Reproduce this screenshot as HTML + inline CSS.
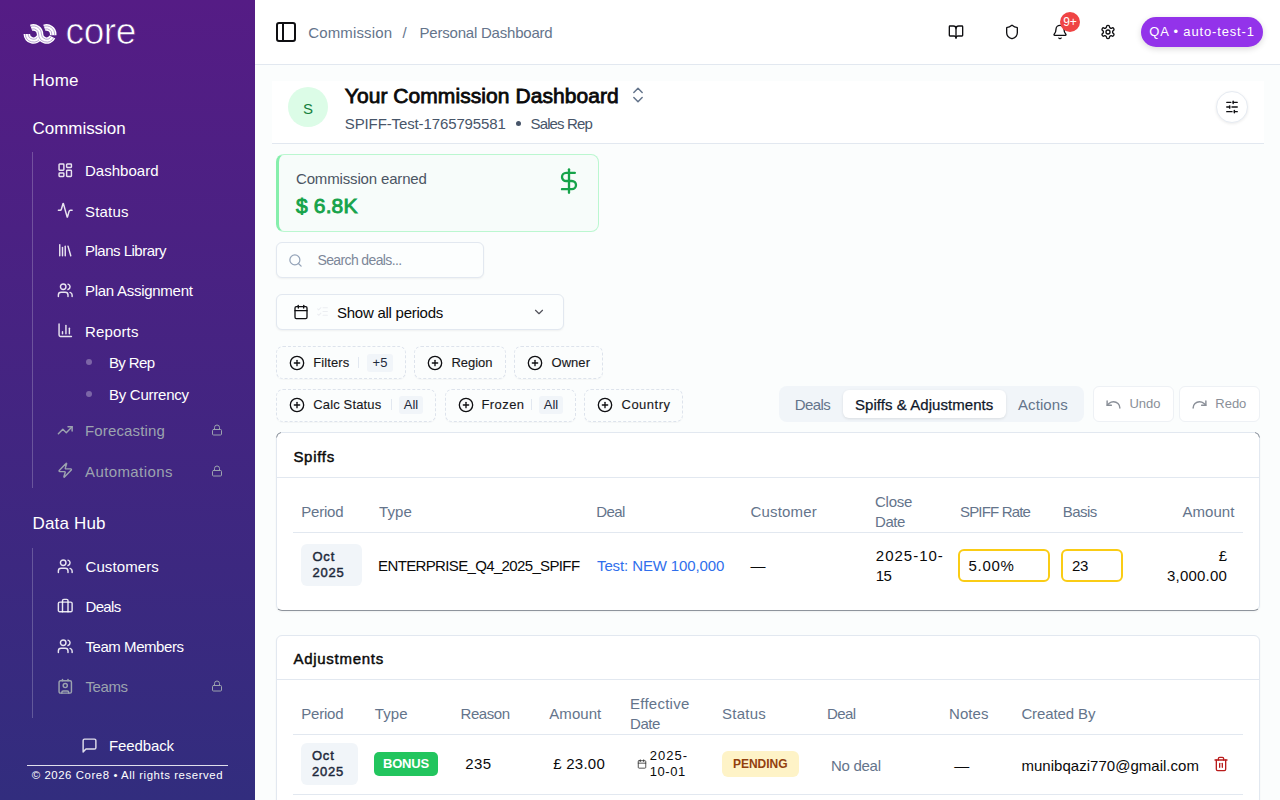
<!DOCTYPE html>
<html><head><meta charset="utf-8">
<style>
*{box-sizing:border-box;margin:0;padding:0}
html,body{width:1280px;height:800px;overflow:hidden;font-family:"Liberation Sans",sans-serif;background:#fbfdfd;position:relative}
.abs{position:absolute}
.t{position:absolute;white-space:nowrap;line-height:1}
svg{position:absolute;overflow:visible}
</style></head><body>
<div class="abs" style="left:0;top:0;width:255px;height:800px;background:linear-gradient(180deg,#551c85 0%,#322d7e 100%)"></div>
<svg style="left:20px;top:20px;" width="40" height="28" viewBox="20 20 40 28" fill="none"><g fill="none" stroke-linecap="butt"><path d="M26.80 34.00 A6.60 6.60 0 0 0 39.38 36.79" stroke="#fff" stroke-width="6.5"/><path d="M28.20 34.00 A5.20 5.20 0 0 0 38.11 36.20" stroke="#8a6bb5" stroke-width="0.6"/><path d="M25.40 34.00 A8.00 8.00 0 0 0 40.65 37.38" stroke="#8a6bb5" stroke-width="0.6"/><path d="M31.14 27.80 A6.60 6.60 0 0 1 40.00 34.00 A6.60 6.60 0 0 0 52.43 37.10" stroke="#fff" stroke-width="6.5"/><path d="M31.62 29.11 A5.20 5.20 0 0 1 38.60 34.00 A8.00 8.00 0 0 0 53.66 37.76" stroke="#8a6bb5" stroke-width="0.6"/><path d="M30.66 26.48 A8.00 8.00 0 0 1 41.40 34.00 A5.20 5.20 0 0 0 51.19 36.44" stroke="#8a6bb5" stroke-width="0.6"/><path d="M44.34 27.80 A6.60 6.60 0 0 1 53.20 34.00 L53.20 35.2" stroke="#fff" stroke-width="6.5"/><path d="M44.82 29.11 A5.20 5.20 0 0 1 51.80 34.00 L51.80 35.2" stroke="#8a6bb5" stroke-width="0.6"/><path d="M43.86 26.48 A8.00 8.00 0 0 1 54.60 34.00 L54.60 35.2" stroke="#8a6bb5" stroke-width="0.6"/></g></svg>
<div class="t" style="left:65.50px;top:12.68px;font-size:37px;color:#fff;letter-spacing:-0.370px;-webkit-text-stroke:0.7px #551c85;">core</div>
<div class="t" style="left:32.60px;top:71.81px;font-size:17px;color:#ffffff;letter-spacing:0.163px;">Home</div>
<div class="t" style="left:32.60px;top:120.01px;font-size:17px;color:#ffffff;letter-spacing:-0.052px;">Commission</div>
<div class="abs" style="left:32px;top:152px;width:1px;height:336px;background:rgba(255,255,255,0.22)"></div>
<svg style="left:56.75px;top:161.75px;" width="16.5" height="16.5" viewBox="0 0 24 24" fill="none"><g stroke="rgba(255,255,255,0.88)" stroke-width="2.1" stroke-linecap="round" stroke-linejoin="round"><rect width="7" height="9" x="3" y="3" rx="1"/><rect width="7" height="5" x="14" y="3" rx="1"/><rect width="7" height="9" x="14" y="12" rx="1"/><rect width="7" height="5" x="3" y="16" rx="1"/></g></svg>
<div class="t" style="left:85.00px;top:163.30px;font-size:15px;color:#ffffff;letter-spacing:0.013px;">Dashboard</div>
<svg style="left:56.75px;top:202.25px;" width="16.5" height="16.5" viewBox="0 0 24 24" fill="none"><g stroke="rgba(255,255,255,0.88)" stroke-width="2.1" stroke-linecap="round" stroke-linejoin="round"><path d="M22 12h-2.48a2 2 0 0 0-1.93 1.46l-2.35 8.36a.25.25 0 0 1-.48 0L9.24 2.18a.25.25 0 0 0-.48 0l-2.35 8.36A2 2 0 0 1 4.49 12H2"/></g></svg>
<div class="t" style="left:85.00px;top:203.80px;font-size:15px;color:#ffffff;letter-spacing:0.196px;">Status</div>
<svg style="left:56.75px;top:241.75px;" width="16.5" height="16.5" viewBox="0 0 24 24" fill="none"><g stroke="rgba(255,255,255,0.88)" stroke-width="2.1" stroke-linecap="round" stroke-linejoin="round"><path d="m16 6 4 14"/><path d="M12 6v14"/><path d="M8 8v12"/><path d="M4 4v16"/></g></svg>
<div class="t" style="left:85.00px;top:243.30px;font-size:15px;color:#ffffff;letter-spacing:-0.503px;">Plans Library</div>
<svg style="left:56.75px;top:281.75px;" width="16.5" height="16.5" viewBox="0 0 24 24" fill="none"><g stroke="rgba(255,255,255,0.88)" stroke-width="2.1" stroke-linecap="round" stroke-linejoin="round"><path d="M16 21v-2a4 4 0 0 0-4-4H6a4 4 0 0 0-4 4v2"/><circle cx="9" cy="7" r="4"/><path d="M22 21v-2a4 4 0 0 0-3-3.87"/><path d="M16 3.13a4 4 0 0 1 0 7.75"/></g></svg>
<div class="t" style="left:85.00px;top:283.30px;font-size:15px;color:#ffffff;letter-spacing:-0.276px;">Plan Assignment</div>
<svg style="left:56.75px;top:322.25px;" width="16.5" height="16.5" viewBox="0 0 24 24" fill="none"><g stroke="rgba(255,255,255,0.88)" stroke-width="2.1" stroke-linecap="round" stroke-linejoin="round"><path d="M3 3v16a2 2 0 0 0 2 2h16"/><path d="M18 17V9"/><path d="M13 17V5"/><path d="M8 17v-3"/></g></svg>
<div class="t" style="left:85.00px;top:323.80px;font-size:15px;color:#ffffff;letter-spacing:0.154px;">Reports</div>
<div class="abs" style="left:86px;top:359px;width:6px;height:6px;border-radius:3px;background:rgba(255,255,255,0.3)"></div>
<div class="t" style="left:108.90px;top:355.30px;font-size:15px;color:#ffffff;letter-spacing:-0.615px;">By Rep</div>
<div class="abs" style="left:86px;top:391px;width:6px;height:6px;border-radius:3px;background:rgba(255,255,255,0.3)"></div>
<div class="t" style="left:108.90px;top:387.30px;font-size:15px;color:#ffffff;letter-spacing:-0.230px;">By Currency</div>
<svg style="left:56.75px;top:421.75px;" width="16.5" height="16.5" viewBox="0 0 24 24" fill="none"><g stroke="#9ca3af" stroke-width="2.1" stroke-linecap="round" stroke-linejoin="round"><path d="M22 7 13.5 15.5 8.5 10.5 2 17"/><path d="M16 7h6v6"/></g></svg>
<div class="t" style="left:85.00px;top:423.30px;font-size:15px;color:#9ca3af;letter-spacing:0.148px;">Forecasting</div>
<svg style="left:210.5px;top:424px;" width="12" height="12" viewBox="0 0 24 24" fill="none"><g stroke="#9ca3af" stroke-width="2" stroke-linecap="round" stroke-linejoin="round"><rect width="18" height="11" x="3" y="11" rx="2"/><path d="M7 11V7a5 5 0 0 1 10 0v4"/></g></svg>
<svg style="left:56.75px;top:462.25px;" width="16.5" height="16.5" viewBox="0 0 24 24" fill="none"><g stroke="#9ca3af" stroke-width="2.1" stroke-linecap="round" stroke-linejoin="round"><path d="M4 14a1 1 0 0 1-.78-1.63l9.9-10.2a.5.5 0 0 1 .86.46l-1.92 6.02A1 1 0 0 0 13 10h7a1 1 0 0 1 .78 1.63l-9.9 10.2a.5.5 0 0 1-.86-.46l1.92-6.02A1 1 0 0 0 11 14z"/></g></svg>
<div class="t" style="left:85.00px;top:463.80px;font-size:15px;color:#9ca3af;letter-spacing:0.402px;">Automations</div>
<svg style="left:210.5px;top:464.5px;" width="12" height="12" viewBox="0 0 24 24" fill="none"><g stroke="#9ca3af" stroke-width="2" stroke-linecap="round" stroke-linejoin="round"><rect width="18" height="11" x="3" y="11" rx="2"/><path d="M7 11V7a5 5 0 0 1 10 0v4"/></g></svg>
<div class="t" style="left:32.60px;top:515.31px;font-size:17px;color:#ffffff;letter-spacing:0.148px;">Data Hub</div>
<div class="abs" style="left:32px;top:548px;width:1px;height:170px;background:rgba(255,255,255,0.22)"></div>
<svg style="left:56.75px;top:557.75px;" width="16.5" height="16.5" viewBox="0 0 24 24" fill="none"><g stroke="rgba(255,255,255,0.88)" stroke-width="2.1" stroke-linecap="round" stroke-linejoin="round"><path d="M16 21v-2a4 4 0 0 0-4-4H6a4 4 0 0 0-4 4v2"/><circle cx="9" cy="7" r="4"/><path d="M22 21v-2a4 4 0 0 0-3-3.87"/><path d="M16 3.13a4 4 0 0 1 0 7.75"/></g></svg>
<div class="t" style="left:85.50px;top:559.30px;font-size:15px;color:#ffffff;letter-spacing:0.098px;">Customers</div>
<svg style="left:56.75px;top:597.75px;" width="16.5" height="16.5" viewBox="0 0 24 24" fill="none"><g stroke="rgba(255,255,255,0.88)" stroke-width="2.1" stroke-linecap="round" stroke-linejoin="round"><path d="M16 20V4a2 2 0 0 0-2-2h-4a2 2 0 0 0-2 2v16"/><rect width="20" height="14" x="2" y="6" rx="2"/></g></svg>
<div class="t" style="left:85.50px;top:599.30px;font-size:15px;color:#ffffff;letter-spacing:-0.670px;">Deals</div>
<svg style="left:56.75px;top:637.75px;" width="16.5" height="16.5" viewBox="0 0 24 24" fill="none"><g stroke="rgba(255,255,255,0.88)" stroke-width="2.1" stroke-linecap="round" stroke-linejoin="round"><path d="M16 21v-2a4 4 0 0 0-4-4H6a4 4 0 0 0-4 4v2"/><circle cx="9" cy="7" r="4"/><path d="M22 21v-2a4 4 0 0 0-3-3.87"/><path d="M16 3.13a4 4 0 0 1 0 7.75"/></g></svg>
<div class="t" style="left:85.50px;top:639.30px;font-size:15px;color:#ffffff;letter-spacing:-0.447px;">Team Members</div>
<svg style="left:56.75px;top:677.75px;" width="16.5" height="16.5" viewBox="0 0 24 24" fill="none"><g stroke="#9ca3af" stroke-width="2.1" stroke-linecap="round" stroke-linejoin="round"><path d="M16 2v2"/><path d="M7 22v-1a2 2 0 0 1 2-2h6a2 2 0 0 1 2 2v1"/><path d="M8 2v2"/><circle cx="12" cy="11" r="3"/><rect x="3" y="4" width="18" height="18" rx="2"/></g></svg>
<div class="t" style="left:85.50px;top:679.30px;font-size:15px;color:#9ca3af;letter-spacing:-0.436px;">Teams</div>
<svg style="left:210.5px;top:680px;" width="12" height="12" viewBox="0 0 24 24" fill="none"><g stroke="#9ca3af" stroke-width="2" stroke-linecap="round" stroke-linejoin="round"><rect width="18" height="11" x="3" y="11" rx="2"/><path d="M7 11V7a5 5 0 0 1 10 0v4"/></g></svg>
<svg style="left:80.5px;top:736.5px;" width="17" height="17" viewBox="0 0 24 24" fill="none"><g stroke="rgba(255,255,255,0.85)" stroke-width="2" stroke-linecap="round" stroke-linejoin="round"><path d="M21 15a2 2 0 0 1-2 2H7l-4 4V5a2 2 0 0 1 2-2h14a2 2 0 0 1 2 2z"/></g></svg>
<div class="t" style="left:109.00px;top:738.30px;font-size:15px;color:#ffffff;letter-spacing:-0.109px;">Feedback</div>
<div class="abs" style="left:27px;top:765px;width:201px;height:1px;background:rgba(255,255,255,0.85)"></div>
<div class="t" style="left:31.70px;top:770.15px;font-size:11.4px;color:#ffffff;letter-spacing:0.574px;">© 2026 Core8 • All rights reserved</div>
<div class="abs" style="left:255px;top:0;width:1025px;height:65px;background:#fff;border-bottom:1px solid #e2e8f0"></div>
<svg style="left:274px;top:20px;" width="24" height="24" viewBox="0 0 24 24" fill="none"><g stroke="#0f0f12" stroke-width="2" stroke-linecap="round" stroke-linejoin="round"><rect width="18" height="18" x="3" y="3" rx="2"/><path d="M9 3v18"/></g></svg>
<div class="t" style="left:308.20px;top:24.60px;font-size:15px;color:#64748b;letter-spacing:0.148px;">Commission</div>
<div class="t" style="left:402.50px;top:24.60px;font-size:15px;color:#64748b;">/</div>
<div class="t" style="left:419.50px;top:24.60px;font-size:15px;color:#64748b;letter-spacing:-0.209px;">Personal Dashboard</div>
<svg style="left:948.0px;top:24.0px;" width="16" height="16" viewBox="0 0 24 24" fill="none"><g stroke="#0f0f12" stroke-width="2" stroke-linecap="round" stroke-linejoin="round"><path d="M12 7v14"/><path d="M3 18a1 1 0 0 1-1-1V4a1 1 0 0 1 1-1h5a4 4 0 0 1 4 4 4 4 0 0 1 4-4h5a1 1 0 0 1 1 1v13a1 1 0 0 1-1 1h-6a3 3 0 0 0-3 3 3 3 0 0 0-3-3z"/></g></svg>
<svg style="left:1004.0px;top:24.0px;" width="16" height="16" viewBox="0 0 24 24" fill="none"><g stroke="#0f0f12" stroke-width="2" stroke-linecap="round" stroke-linejoin="round"><path d="M20 13c0 5-3.5 7.5-7.66 8.95a1 1 0 0 1-.67-.01C7.5 20.5 4 18 4 13V6a1 1 0 0 1 1-1c2 0 4.5-1.2 6.24-2.72a1.17 1.17 0 0 1 1.52 0C14.51 3.81 17 5 19 5a1 1 0 0 1 1 1z"/></g></svg>
<svg style="left:1052.0px;top:24.0px;" width="16" height="16" viewBox="0 0 24 24" fill="none"><g stroke="#0f0f12" stroke-width="2" stroke-linecap="round" stroke-linejoin="round"><path d="M10.268 21a2 2 0 0 0 3.464 0"/><path d="M3.262 15.326A1 1 0 0 0 4 17h16a1 1 0 0 0 .74-1.673C19.41 13.956 18 12.499 18 8A6 6 0 0 0 6 8c0 4.499-1.411 5.956-2.738 7.326"/></g></svg>
<svg style="left:1100.0px;top:24.0px;" width="16" height="16" viewBox="0 0 24 24" fill="none"><g stroke="#0f0f12" stroke-width="2" stroke-linecap="round" stroke-linejoin="round"><path d="M12.22 2h-.44a2 2 0 0 0-2 2v.18a2 2 0 0 1-1 1.73l-.43.25a2 2 0 0 1-2 0l-.15-.08a2 2 0 0 0-2.73.73l-.22.38a2 2 0 0 0 .73 2.73l.15.1a2 2 0 0 1 1 1.72v.51a2 2 0 0 1-1 1.74l-.15.09a2 2 0 0 0-.73 2.73l.22.38a2 2 0 0 0 2.73.73l.15-.08a2 2 0 0 1 2 0l.43.25a2 2 0 0 1 1 1.73V20a2 2 0 0 0 2 2h.44a2 2 0 0 0 2-2v-.18a2 2 0 0 1 1-1.73l.43-.25a2 2 0 0 1 2 0l.15.08a2 2 0 0 0 2.73-.73l.22-.39a2 2 0 0 0-.73-2.73l-.15-.08a2 2 0 0 1-1-1.74v-.5a2 2 0 0 1 1-1.74l.15-.09a2 2 0 0 0 .73-2.73l-.22-.38a2 2 0 0 0-2.73-.73l-.15.08a2 2 0 0 1-2 0l-.43-.25a2 2 0 0 1-1-1.73V4a2 2 0 0 0-2-2z"/><circle cx="12" cy="12" r="3"/></g></svg>
<div class="abs" style="left:1060px;top:12px;width:20px;height:20px;border-radius:10px;background:#ef4444"></div>
<div class="t" style="left:1070.00px;top:16.04px;font-size:12px;color:#fff;width:20px;margin-left:-10px;text-align:center;">9+</div>
<div class="abs" style="left:1141px;top:17px;width:122px;height:30px;border-radius:15px;background:#9333ea;box-shadow:0 2px 6px rgba(0,0,0,0.15)"></div>
<div class="t" style="left:1149.30px;top:25.10px;font-size:13px;color:#fff;letter-spacing:0.845px;">QA • auto-test-1</div>
<div class="abs" style="left:272px;top:81px;width:992px;height:63px;background:#fff;border-bottom:1px solid #e2e8f0"></div>
<div class="abs" style="left:288px;top:87px;width:40px;height:40px;border-radius:20px;background:#dcfce7"></div>
<div class="t" style="left:308.00px;top:100.80px;font-size:15px;color:#15803d;width:20px;margin-left:-10px;text-align:center;">S</div>
<div class="t" style="left:344.75px;top:84.97px;font-size:21px;color:#0a0a0a;-webkit-text-stroke:0.8px #0a0a0a;letter-spacing:0.065px;">Your Commission Dashboard</div>
<svg style="left:627.5px;top:84.5px;" width="20" height="20" viewBox="0 0 24 24" fill="none"><g stroke="#64748b" stroke-width="1.8" stroke-linecap="round" stroke-linejoin="round"><path d="m7 15 5 5 5-5"/><path d="m7 9 5-5 5 5"/></g></svg>
<div class="t" style="left:344.75px;top:116.30px;font-size:15px;color:#475569;letter-spacing:-0.116px;">SPIFF-Test-1765795581</div>
<div class="abs" style="left:516px;top:121px;width:5px;height:5px;border-radius:3px;background:#475569"></div>
<div class="t" style="left:530.50px;top:116.30px;font-size:15px;color:#475569;letter-spacing:-0.857px;">Sales Rep</div>
<div class="abs" style="left:1216px;top:91px;width:32px;height:32px;border-radius:16px;background:#fff;border:1px solid #e6ebf2;box-shadow:0 1px 3px rgba(0,0,0,0.08)"></div>
<svg style="left:1225px;top:100px;" width="14" height="14" viewBox="0 0 24 24" fill="none"><g stroke="#0f0f12" stroke-width="2.4" stroke-linecap="round" stroke-linejoin="round"><line x1="21" x2="14" y1="4" y2="4"/><line x1="10" x2="3" y1="4" y2="4"/><line x1="21" x2="12" y1="12" y2="12"/><line x1="8" x2="3" y1="12" y2="12"/><line x1="21" x2="16" y1="20" y2="20"/><line x1="12" x2="3" y1="20" y2="20"/><line x1="14" x2="14" y1="2" y2="6"/><line x1="8" x2="8" y1="10" y2="14"/><line x1="16" x2="16" y1="18" y2="22"/></g></svg>
<div class="abs" style="left:276px;top:154px;width:323px;height:78px;border-radius:8px;background:#f7fcfa;border:1px solid #bbf7d0;border-left:3px solid #86efac"></div>
<div class="t" style="left:296.00px;top:170.50px;font-size:15px;color:#4b5563;letter-spacing:-0.158px;">Commission earned</div>
<div class="t" style="left:296.00px;top:195.42px;font-size:21px;color:#16a34a;-webkit-text-stroke:0.9px #16a34a;letter-spacing:0.148px;">$ 6.8K</div>
<svg style="left:554.6px;top:166.85px;" width="28" height="28" viewBox="0 0 24 24" fill="none"><g stroke="#16a34a" stroke-width="2" stroke-linecap="round" stroke-linejoin="round"><line x1="12" x2="12" y1="2" y2="22"/><path d="M17 5H9.5a3.5 3.5 0 0 0 0 7h5a3.5 3.5 0 0 1 0 7H6"/></g></svg>
<div class="abs" style="left:276px;top:242px;width:208px;height:36px;border-radius:6px;background:#fcfefe;border:1px solid #e2e8f0;box-shadow:0 1px 2px rgba(0,0,0,0.05)"></div>
<svg style="left:288px;top:253px;" width="15" height="15" viewBox="0 0 24 24" fill="none"><g stroke="#94a3b8" stroke-width="2" stroke-linecap="round" stroke-linejoin="round"><circle cx="11" cy="11" r="8"/><path d="m21 21-4.3-4.3"/></g></svg>
<div class="t" style="left:317.50px;top:252.90px;font-size:14px;color:#7c8799;letter-spacing:-0.626px;">Search deals...</div>
<div class="abs" style="left:276px;top:294px;width:288px;height:36px;border-radius:6px;background:#fcfefe;border:1px solid #e2e8f0;box-shadow:0 1px 2px rgba(0,0,0,0.05)"></div>
<svg style="left:292.5px;top:304px;" width="16" height="16" viewBox="0 0 24 24" fill="none"><g stroke="#0f0f12" stroke-width="2" stroke-linecap="round" stroke-linejoin="round"><path d="M8 2v4"/><path d="M16 2v4"/><rect width="18" height="18" x="3" y="4" rx="2"/><path d="M3 10h18"/></g></svg>
<svg style="left:316px;top:305px;" width="13" height="13" viewBox="0 0 24 24" fill="none"><g stroke="#eceef2" stroke-width="2" stroke-linecap="round" stroke-linejoin="round"><path d="M13 5h8"/><path d="M13 12h8"/><path d="M13 19h8"/><path d="m3 17 2 2 4-4"/><path d="m3 7 2 2 4-4"/></g></svg>
<div class="t" style="left:337.00px;top:305.30px;font-size:15px;color:#0a0a0a;letter-spacing:-0.254px;">Show all periods</div>
<svg style="left:532px;top:305px;" width="14" height="14" viewBox="0 0 24 24" fill="none"><g stroke="#52525b" stroke-width="2" stroke-linecap="round" stroke-linejoin="round"><path d="m6 9 6 6 6-6"/></g></svg>
<div class="abs" style="left:276px;top:346px;width:130px;height:33px;border-radius:7px;border:1px dashed #dde3ec;background:transparent;box-shadow:0 1px 1px rgba(0,0,0,0.03)"></div>
<svg style="left:289px;top:355px;" width="16" height="16" viewBox="0 0 24 24" fill="none"><g stroke="#0f0f12" stroke-width="2" stroke-linecap="round" stroke-linejoin="round"><circle cx="12" cy="12" r="10"/><path d="M8 12h8"/><path d="M12 8v8"/></g></svg>
<div class="t" style="left:313.30px;top:356.20px;font-size:13px;color:#18181b;-webkit-text-stroke:0.12px #18181b;letter-spacing:0.087px;">Filters</div>
<div class="abs" style="left:358px;top:357px;width:1px;height:11px;background:#e2e8f0"></div>
<div class="abs" style="left:367px;top:354px;width:26px;height:17.5px;background:#f1f5f9;border-radius:3px"></div>
<div class="t" style="left:380.00px;top:356.20px;font-size:13px;color:#1e293b;width:26px;margin-left:-13px;text-align:center;">+5</div>
<div class="abs" style="left:414px;top:346px;width:92px;height:33px;border-radius:7px;border:1px dashed #dde3ec;background:transparent;box-shadow:0 1px 1px rgba(0,0,0,0.03)"></div>
<svg style="left:427px;top:355px;" width="16" height="16" viewBox="0 0 24 24" fill="none"><g stroke="#0f0f12" stroke-width="2" stroke-linecap="round" stroke-linejoin="round"><circle cx="12" cy="12" r="10"/><path d="M8 12h8"/><path d="M12 8v8"/></g></svg>
<div class="t" style="left:451.40px;top:356.20px;font-size:13px;color:#18181b;-webkit-text-stroke:0.12px #18181b;letter-spacing:-0.033px;">Region</div>
<div class="abs" style="left:514px;top:346px;width:89px;height:33px;border-radius:7px;border:1px dashed #dde3ec;background:transparent;box-shadow:0 1px 1px rgba(0,0,0,0.03)"></div>
<svg style="left:527px;top:355px;" width="16" height="16" viewBox="0 0 24 24" fill="none"><g stroke="#0f0f12" stroke-width="2" stroke-linecap="round" stroke-linejoin="round"><circle cx="12" cy="12" r="10"/><path d="M8 12h8"/><path d="M12 8v8"/></g></svg>
<div class="t" style="left:551.50px;top:356.20px;font-size:13px;color:#18181b;-webkit-text-stroke:0.12px #18181b;letter-spacing:0.042px;">Owner</div>
<div class="abs" style="left:276px;top:389px;width:160px;height:33px;border-radius:7px;border:1px dashed #dde3ec;background:transparent;box-shadow:0 1px 1px rgba(0,0,0,0.03)"></div>
<svg style="left:289px;top:397px;" width="16" height="16" viewBox="0 0 24 24" fill="none"><g stroke="#0f0f12" stroke-width="2" stroke-linecap="round" stroke-linejoin="round"><circle cx="12" cy="12" r="10"/><path d="M8 12h8"/><path d="M12 8v8"/></g></svg>
<div class="t" style="left:313.30px;top:398.30px;font-size:13px;color:#18181b;-webkit-text-stroke:0.12px #18181b;letter-spacing:0.139px;">Calc Status</div>
<div class="abs" style="left:390.5px;top:399px;width:1.0px;height:11px;background:#e2e8f0"></div>
<div class="abs" style="left:399px;top:396px;width:24px;height:17.5px;background:#f1f5f9;border-radius:3px"></div>
<div class="t" style="left:411.00px;top:398.30px;font-size:13px;color:#1e293b;width:24px;margin-left:-12px;text-align:center;">All</div>
<div class="abs" style="left:445px;top:389px;width:131px;height:33px;border-radius:7px;border:1px dashed #dde3ec;background:transparent;box-shadow:0 1px 1px rgba(0,0,0,0.03)"></div>
<svg style="left:458px;top:397px;" width="16" height="16" viewBox="0 0 24 24" fill="none"><g stroke="#0f0f12" stroke-width="2" stroke-linecap="round" stroke-linejoin="round"><circle cx="12" cy="12" r="10"/><path d="M8 12h8"/><path d="M12 8v8"/></g></svg>
<div class="t" style="left:481.50px;top:398.30px;font-size:13px;color:#18181b;-webkit-text-stroke:0.12px #18181b;letter-spacing:0.423px;">Frozen</div>
<div class="abs" style="left:530.5px;top:399px;width:1.0px;height:11px;background:#e2e8f0"></div>
<div class="abs" style="left:539px;top:396px;width:24px;height:17.5px;background:#f1f5f9;border-radius:3px"></div>
<div class="t" style="left:551.00px;top:398.30px;font-size:13px;color:#1e293b;width:24px;margin-left:-12px;text-align:center;">All</div>
<div class="abs" style="left:584px;top:389px;width:99px;height:33px;border-radius:7px;border:1px dashed #dde3ec;background:transparent;box-shadow:0 1px 1px rgba(0,0,0,0.03)"></div>
<svg style="left:597px;top:397px;" width="16" height="16" viewBox="0 0 24 24" fill="none"><g stroke="#0f0f12" stroke-width="2" stroke-linecap="round" stroke-linejoin="round"><circle cx="12" cy="12" r="10"/><path d="M8 12h8"/><path d="M12 8v8"/></g></svg>
<div class="t" style="left:621.50px;top:398.30px;font-size:13px;color:#18181b;-webkit-text-stroke:0.12px #18181b;letter-spacing:0.497px;">Country</div>
<div class="abs" style="left:779px;top:386px;width:305px;height:36px;border-radius:8px;background:#f1f5f9"></div>
<div class="abs" style="left:843px;top:390px;width:163px;height:28px;border-radius:6px;background:#fff;box-shadow:0 1px 3px rgba(0,0,0,0.1)"></div>
<div class="t" style="left:794.80px;top:397.20px;font-size:15px;color:#64748b;letter-spacing:-0.570px;">Deals</div>
<div class="t" style="left:855.00px;top:397.20px;font-size:15px;color:#0f172a;-webkit-text-stroke:0.25px #0f172a;letter-spacing:0.055px;">Spiffs &amp; Adjustments</div>
<div class="t" style="left:1018.00px;top:397.20px;font-size:15px;color:#64748b;letter-spacing:0.073px;">Actions</div>
<div class="abs" style="left:1092.5px;top:386px;width:81.0px;height:35.5px;border-radius:6px;background:#fff;border:1px solid #eef1f5;opacity:1"></div>
<div class="abs" style="left:1178.5px;top:386px;width:81.0px;height:35.5px;border-radius:6px;background:#fff;border:1px solid #eef1f5;opacity:1"></div>
<svg style="left:1104.5px;top:395.5px;" width="17" height="17" viewBox="0 0 24 24" fill="none"><g stroke="#8a8f98" stroke-width="2" stroke-linecap="round" stroke-linejoin="round"><path d="M3 7v6h6"/><path d="M21 17a9 9 0 0 0-9-9 9 9 0 0 0-6 2.3L3 13"/></g></svg>
<div class="t" style="left:1129.40px;top:397.00px;font-size:13px;color:#8a8f98;letter-spacing:-0.020px;">Undo</div>
<svg style="left:1190.5px;top:395.5px;" width="17" height="17" viewBox="0 0 24 24" fill="none"><g stroke="#8a8f98" stroke-width="2" stroke-linecap="round" stroke-linejoin="round"><path d="M21 7v6h-6"/><path d="M3 17a9 9 0 0 1 9-9 9 9 0 0 1 6 2.3l3 2.7"/></g></svg>
<div class="t" style="left:1215.30px;top:397.00px;font-size:13px;color:#8a8f98;letter-spacing:-0.020px;">Redo</div>
<div class="abs" style="left:276px;top:432px;width:984px;height:179px;border-radius:6px;background:#fff;border:1px solid #e2e8f0;border-bottom-color:#8e949c;box-shadow:0 1px 2px rgba(0,0,0,0.05)"></div>
<svg style="left:276px;top:432px;" width="8" height="8" viewBox="0 0 8 8" fill="none"><path d="M0.5 5.5 A5.5 5.5 0 0 1 5 0.5" stroke="#8e949c" stroke-width="1"/></svg>
<svg style="left:1252px;top:432px;" width="8" height="8" viewBox="0 0 8 8" fill="none"><path d="M3 0.5 A5.5 5.5 0 0 1 7.5 5.5" stroke="#8e949c" stroke-width="1"/></svg>
<div class="abs" style="left:277px;top:477px;width:982px;height:1px;background:#e2e8f0"></div>
<div class="t" style="left:293.40px;top:448.50px;font-size:15px;color:#0a0a0a;-webkit-text-stroke:0.45px #0a0a0a;letter-spacing:0.726px;">Spiffs</div>
<div class="t" style="left:301.25px;top:503.70px;font-size:15px;color:#64748b;letter-spacing:-0.227px;">Period</div>
<div class="t" style="left:379.00px;top:503.70px;font-size:15px;color:#64748b;letter-spacing:0.120px;">Type</div>
<div class="t" style="left:596.20px;top:503.70px;font-size:15px;color:#64748b;letter-spacing:-0.588px;">Deal</div>
<div class="t" style="left:750.50px;top:503.70px;font-size:15px;color:#64748b;letter-spacing:0.185px;">Customer</div>
<div class="t" style="left:875.00px;top:493.90px;font-size:15px;color:#64748b;letter-spacing:-0.270px;">Close</div>
<div class="t" style="left:875.00px;top:514.30px;font-size:15px;color:#64748b;letter-spacing:-0.421px;">Date</div>
<div class="t" style="left:960.00px;top:503.70px;font-size:15px;color:#64748b;letter-spacing:-0.836px;">SPIFF Rate</div>
<div class="t" style="left:1062.70px;top:503.70px;font-size:15px;color:#64748b;letter-spacing:-0.536px;">Basis</div>
<div class="t" style="right:45.50px;top:503.70px;font-size:15px;color:#64748b;letter-spacing:0.051px;">Amount</div>
<div class="abs" style="left:293px;top:532px;width:950px;height:1px;background:#e2e8f0"></div>
<div class="abs" style="left:301px;top:544px;width:61px;height:42px;border-radius:6px;background:#f1f5f9"></div>
<div class="t" style="left:312.50px;top:550.25px;font-size:13px;color:#1e293b;-webkit-text-stroke:0.45px #1e293b;letter-spacing:0.759px;">Oct</div>
<div class="t" style="left:312.50px;top:565.60px;font-size:13px;color:#1e293b;-webkit-text-stroke:0.45px #1e293b;letter-spacing:0.770px;">2025</div>
<div class="t" style="left:378.10px;top:558.30px;font-size:15px;color:#0a0a0a;letter-spacing:-0.644px;">ENTERPRISE_Q4_2025_SPIFF</div>
<div class="t" style="left:597.00px;top:558.30px;font-size:15px;color:#2f6fec;letter-spacing:-0.114px;">Test: NEW 100,000</div>
<div class="t" style="left:750.50px;top:558.30px;font-size:15px;color:#0a0a0a;letter-spacing:-4.000px;">—</div>
<div class="t" style="left:875.80px;top:547.90px;font-size:15px;color:#0a0a0a;letter-spacing:0.994px;">2025-10-</div>
<div class="t" style="left:875.80px;top:568.30px;font-size:15px;color:#0a0a0a;letter-spacing:-0.593px;">15</div>
<div class="abs" style="left:958px;top:548.5px;width:91.5px;height:33px;border-radius:6px;background:#fff;border:2px solid #facc15"></div>
<div class="t" style="left:968.50px;top:558.30px;font-size:15px;color:#0a0a0a;letter-spacing:0.694px;">5.00%</div>
<div class="abs" style="left:1060.5px;top:548.5px;width:62.5px;height:33px;border-radius:6px;background:#fff;border:2px solid #facc15"></div>
<div class="t" style="left:1072.00px;top:558.30px;font-size:15px;color:#0a0a0a;letter-spacing:-0.343px;">23</div>
<div class="t" style="right:53.00px;top:547.90px;font-size:15px;color:#0a0a0a;">£</div>
<div class="t" style="right:53.00px;top:568.30px;font-size:15px;color:#0a0a0a;letter-spacing:0.201px;">3,000.00</div>
<div class="abs" style="left:276px;top:634.5px;width:984px;height:200px;border-radius:6px;background:#fff;border:1px solid #e2e8f0;box-shadow:0 1px 2px rgba(0,0,0,0.06)"></div>
<div class="abs" style="left:277px;top:679px;width:982px;height:1px;background:#e2e8f0"></div>
<div class="t" style="left:293.40px;top:651.05px;font-size:15px;color:#0a0a0a;-webkit-text-stroke:0.45px #0a0a0a;letter-spacing:0.733px;">Adjustments</div>
<div class="t" style="left:301.25px;top:705.60px;font-size:15px;color:#64748b;letter-spacing:-0.227px;">Period</div>
<div class="t" style="left:374.70px;top:705.60px;font-size:15px;color:#64748b;letter-spacing:0.120px;">Type</div>
<div class="t" style="left:460.60px;top:705.60px;font-size:15px;color:#64748b;letter-spacing:-0.451px;">Reason</div>
<div class="t" style="left:549.30px;top:705.60px;font-size:15px;color:#64748b;letter-spacing:0.051px;">Amount</div>
<div class="t" style="left:630.00px;top:696.30px;font-size:15px;color:#64748b;letter-spacing:0.250px;">Effective</div>
<div class="t" style="left:630.00px;top:716.30px;font-size:15px;color:#64748b;letter-spacing:-0.421px;">Date</div>
<div class="t" style="left:722.00px;top:705.60px;font-size:15px;color:#64748b;letter-spacing:0.246px;">Status</div>
<div class="t" style="left:827.00px;top:705.60px;font-size:15px;color:#64748b;letter-spacing:-0.588px;">Deal</div>
<div class="t" style="left:949.00px;top:705.60px;font-size:15px;color:#64748b;letter-spacing:0.063px;">Notes</div>
<div class="t" style="left:1021.40px;top:705.60px;font-size:15px;color:#64748b;letter-spacing:-0.104px;">Created By</div>
<div class="abs" style="left:293px;top:734px;width:950px;height:1px;background:#e2e8f0"></div>
<div class="abs" style="left:301px;top:743px;width:57px;height:42px;border-radius:6px;background:#f1f5f9"></div>
<div class="t" style="left:312.00px;top:749.20px;font-size:13px;color:#1e293b;-webkit-text-stroke:0.45px #1e293b;letter-spacing:0.759px;">Oct</div>
<div class="t" style="left:312.00px;top:764.60px;font-size:13px;color:#1e293b;-webkit-text-stroke:0.45px #1e293b;letter-spacing:0.770px;">2025</div>
<div class="abs" style="left:374px;top:752px;width:64px;height:23.5px;border-radius:5px;background:#22c55e"></div>
<div class="t" style="left:406.00px;top:757.30px;font-size:13px;color:#fff;font-weight:700;letter-spacing:-0.190px;transform:translateX(-50%);">BONUS</div>
<div class="t" style="left:465.30px;top:756.20px;font-size:15px;color:#0a0a0a;letter-spacing:0.324px;">235</div>
<div class="t" style="left:553.20px;top:756.20px;font-size:15px;color:#0a0a0a;letter-spacing:0.250px;">£ 23.00</div>
<svg style="left:637px;top:758.5px;" width="10" height="10" viewBox="0 0 24 24" fill="none"><g stroke="#333" stroke-width="2" stroke-linecap="round" stroke-linejoin="round"><path d="M8 2v4"/><path d="M16 2v4"/><rect width="18" height="18" x="3" y="4" rx="2"/><path d="M3 10h18"/></g></svg>
<div class="t" style="left:649.70px;top:748.90px;font-size:13px;color:#0a0a0a;letter-spacing:1.050px;">2025-</div>
<div class="t" style="left:649.70px;top:764.50px;font-size:13px;color:#0a0a0a;letter-spacing:0.550px;">10-01</div>
<div class="abs" style="left:722px;top:751px;width:77px;height:26px;border-radius:6px;background:#fef3c7"></div>
<div class="t" style="left:733.00px;top:758.34px;font-size:12px;color:#92400e;font-weight:700;letter-spacing:-0.025px;">PENDING</div>
<div class="t" style="left:831.00px;top:757.70px;font-size:15px;color:#64748b;letter-spacing:-0.286px;">No deal</div>
<div class="t" style="left:954.30px;top:757.70px;font-size:15px;color:#0a0a0a;letter-spacing:-4.000px;">—</div>
<div class="t" style="left:1021.40px;top:757.70px;font-size:15px;color:#0a0a0a;letter-spacing:0.028px;">munibqazi770@gmail.com</div>
<svg style="left:1213px;top:756px;" width="16" height="16" viewBox="0 0 24 24" fill="none"><g stroke="#b91c1c" stroke-width="2" stroke-linecap="round" stroke-linejoin="round"><path d="M3 6h18"/><path d="M19 6v14c0 1-1 2-2 2H7c-1 0-2-1-2-2V6"/><path d="M8 6V4c0-1 1-2 2-2h4c1 0 2 1 2 2v2"/><line x1="10" x2="10" y1="11" y2="17"/><line x1="14" x2="14" y1="11" y2="17"/></g></svg>
<div class="abs" style="left:293px;top:794px;width:950px;height:1px;background:#e2e8f0"></div>
</body></html>
